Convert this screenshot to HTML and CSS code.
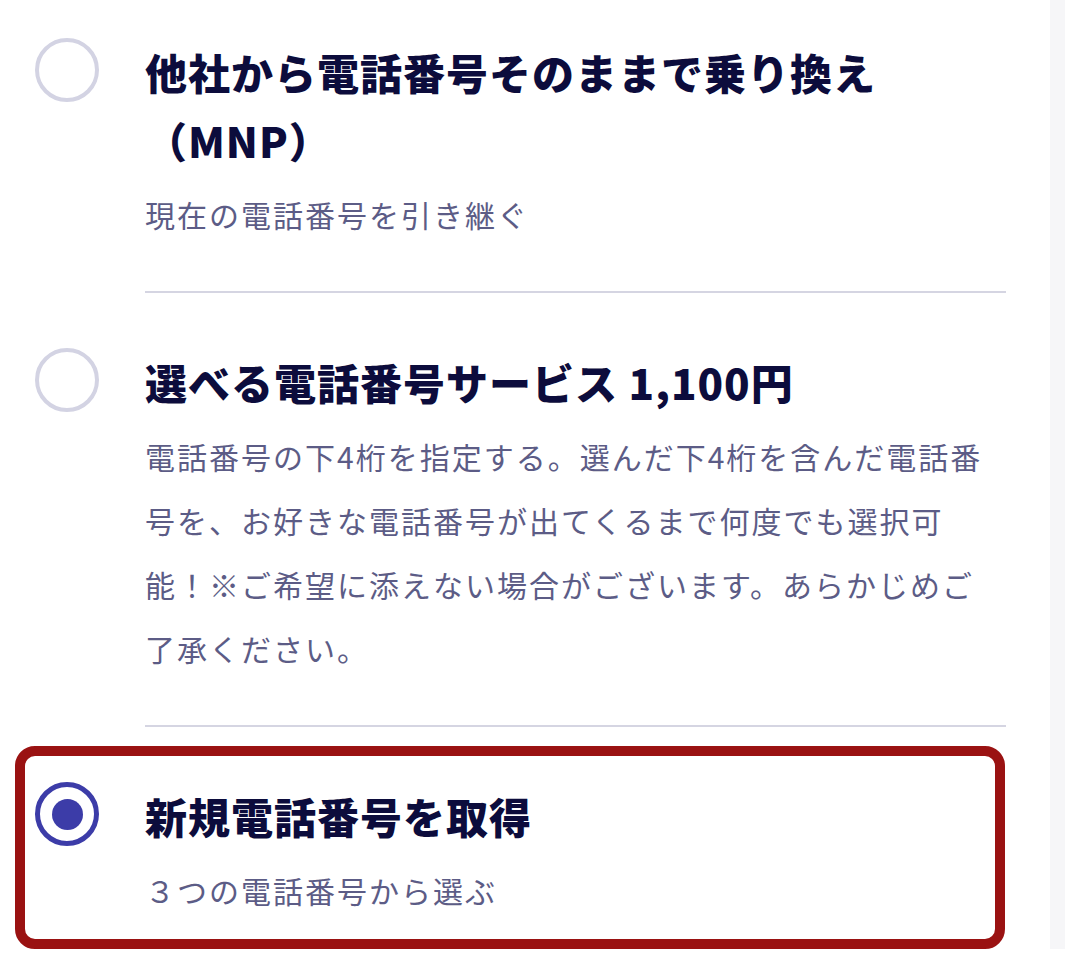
FILE: index.html
```html
<!DOCTYPE html>
<html lang="ja">
<head>
<meta charset="utf-8">
<title>電話番号の選択</title>
<link rel="stylesheet" href="styles.css">
</head>
<body>
<div class="page">
  <main class="options">
    <div class="option">
      <span class="radio"></span>
      <div class="body">
        <div class="title">他社から電話番号そのままで乗り換え（MNP）</div>
        <div class="desc">現在の電話番号を引き継ぐ</div>
      </div>
    </div>
    <div class="option">
      <span class="radio"></span>
      <div class="body">
        <div class="title">選べる電話番号サービス 1,100円</div>
        <div class="desc">電話番号の下4桁を指定する。選んだ下4桁を含んだ電話番号を、お好きな電話番号が出てくるまで何度でも選択可能！※ご希望に添えない場合がございます。あらかじめご了承ください。</div>
      </div>
    </div>
    <div class="option selected">
      <span class="radio checked"></span>
      <div class="body">
        <div class="title">新規電話番号を取得</div>
        <div class="desc">３つの電話番号から選ぶ</div>
      </div>
    </div>
  </main>
  <aside class="strip"></aside>
</div>
</body>
</html>
```

FILE: styles.css
```css
html, body {
  margin: 0;
  padding: 0;
  background: #ffffff;
}

body {
  font-family: "Noto Sans CJK JP", "Noto Sans", sans-serif;
}

.page {
  display: grid;
  grid-template-columns: 1050px 15px;
}

.strip {
  background: #f6f6f8;
}

.options {
  display: flex;
  flex-direction: column;
  padding-left: 35px;
  padding-right: 44px;
}

.option {
  display: flex;
  align-items: flex-start;
  gap: 46px;
  padding-top: 55px;
}

.option:first-child {
  padding-top: 38px;
}

.radio {
  flex: 0 0 auto;
  width: 64px;
  height: 64px;
  box-sizing: border-box;
  border: 4px solid #d3d3e3;
  border-radius: 50%;
  display: flex;
  align-items: center;
  justify-content: center;
}

.radio.checked {
  border: 5px solid #3c3ca8;
}

.radio.checked::before {
  content: "";
  width: 31px;
  height: 31px;
  border-radius: 50%;
  background: #3c3ca8;
}

.body {
  flex: 1 1 auto;
  min-width: 0;
  padding-bottom: 45px;
  border-bottom: 2px solid #d5d5e2;
}

.title {
  font-size: 42px;
  line-height: 68px;
  font-weight: 900;
  letter-spacing: 1px;
  color: #0c0c3c;
}

.desc {
  max-width: 850px;
  margin-top: 8px;
  font-size: 30px;
  line-height: 64px;
  letter-spacing: 2px;
  color: #5c5c86;
}

.option.selected {
  position: relative;
  padding-bottom: 27px;
}

.option.selected .body {
  border-bottom: none;
  padding-bottom: 0;
}

.option.selected::after {
  content: "";
  position: absolute;
  top: 19px;
  left: -20px;
  right: 1px;
  bottom: 0;
  border: 10px solid #9a1212;
  border-radius: 20px;
  pointer-events: none;
}
```
